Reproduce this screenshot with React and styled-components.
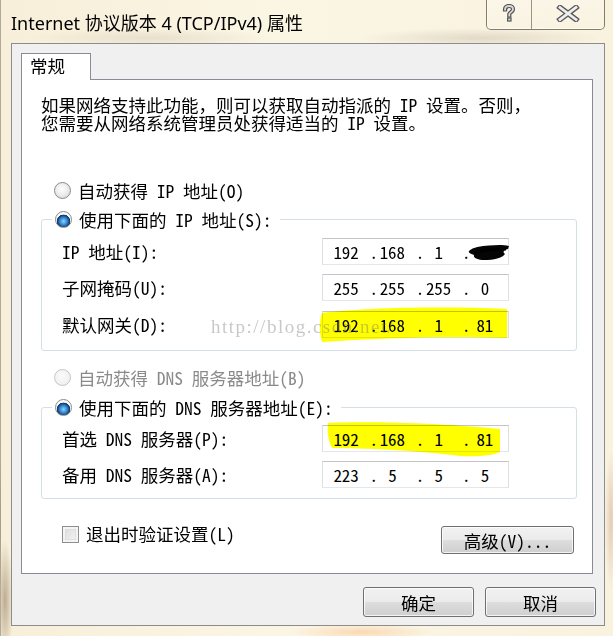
import React from 'react';
import styled, { createGlobalStyle } from 'styled-components';

const BODY_FONT = `"Noto Sans Mono CJK SC", "Noto Sans CJK SC", sans-serif`;

const GlobalStyle = createGlobalStyle`
  html, body {
    margin: 0;
    padding: 0;
  }
  body {
    width: 613px;
    height: 636px;
    overflow: hidden;
    background: #fbf5e4;
  }
`;

export default function App() {
  return (
    <>
      <GlobalStyle />
      <Window>
        <TitleBar>
          <TitleText>Internet 协议版本 4 (TCP/IPv4) 属性</TitleText>
          <CaptionGroup>
            <CaptionButton $w={44}>
              <HelpGlyph />
            </CaptionButton>
            <CaptionButton $w={72} $divider>
              <CloseGlyph />
            </CaptionButton>
          </CaptionGroup>
        </TitleBar>

        <Client>
          <TabStrip>
            <Tab>常规</Tab>
          </TabStrip>
          <Panel>
            <Description>
              如果网络支持此功能，则可以获取自动指派的 IP 设置。否则，
              <br />
              您需要从网络系统管理员处获得适当的 IP 设置。
            </Description>

            <RadioRow $top={47}>
              <RadioMark />
              自动获得 IP 地址(O)
            </RadioRow>

            <Group $top={5} $bottom={12}>
              <GroupLegend>
                <RadioRow>
                  <RadioMark $checked />
                  使用下面的 IP 地址(S):
                </RadioRow>
              </GroupLegend>
              <FieldRow>
                <FieldLabel>IP 地址(I):</FieldLabel>
                <IpField parts={['192', '168', '1', '']} scribble />
              </FieldRow>
              <FieldRow>
                <FieldLabel>子网掩码(U):</FieldLabel>
                <IpField parts={['255', '255', '255', '0']} />
              </FieldRow>
              <FieldRow>
                <FieldLabel>默认网关(D):</FieldLabel>
                <IpField parts={['192', '168', '1', '81']} marker="gateway" />
                <Watermark>http://blog.csdn.net/</Watermark>
              </FieldRow>
            </Group>

            <RadioRow $top={15} $disabled>
              <RadioMark $disabled />
              自动获得 DNS 服务器地址(B)
            </RadioRow>

            <Group $top={6} $bottom={10} $pad={5}>
              <GroupLegend>
                <RadioRow>
                  <RadioMark $checked />
                  使用下面的 DNS 服务器地址(E):
                </RadioRow>
              </GroupLegend>
              <FieldRow>
                <FieldLabel>首选 DNS 服务器(P):</FieldLabel>
                <IpField parts={['192', '168', '1', '81']} marker="dns" />
              </FieldRow>
              <FieldRow>
                <FieldLabel>备用 DNS 服务器(A):</FieldLabel>
                <IpField parts={['223', '5', '5', '5']} />
              </FieldRow>
            </Group>

            <BottomRow>
              <CheckRow>
                <CheckMark />
                退出时验证设置(L)
              </CheckRow>
              <PushButton $w={133} $h={28}>高级(V)...</PushButton>
            </BottomRow>
          </Panel>

          <Footer>
            <PushButton $w={111} $h={30}>确定</PushButton>
            <PushButton $w={111} $h={30}>取消</PushButton>
          </Footer>
        </Client>
      </Window>
    </>
  );
}

function IpField({ parts, marker, scribble }) {
  return (
    <IpBox>
      {parts.map((p, i) => (
        <IpCell key={i}>
          <IpDot>{i > 0 ? '.' : ''}</IpDot>
          <IpNum>{p}</IpNum>
          <span />
        </IpCell>
      ))}
      {scribble && (
        <Marker $x={145} $y={4} $w={42} $h={19} viewBox="0 0 42 19">
          <path
            d="M1,8 C5,4 13,3 21,2.5 C28,2 35,1.5 41,3 L40,6 C36,7 34,9 37,11 C34,15 26,17 16,17 C10,17 5,15 6,12 C3,11 0,10 1,8 Z"
            fill="#050505"
          />
          <path d="M6,10 C14,7 26,6 38,6" stroke="#000" strokeWidth="3" fill="none" />
        </Marker>
      )}
      {marker === 'gateway' && (
        <Marker $x={-4} $y={-5} $w={188} $h={36} viewBox="0 0 188 36" $blend>
          <path
            d="M3,6 C40,1 120,-1 188,2 L188,31 C130,29 60,31 3,35 C0,25 0,14 3,6 Z"
            fill="#ffff00"
          />
        </Marker>
      )}
      {marker === 'dns' && (
        <Marker $x={5} $y={-6} $w={173} $h={38} viewBox="0 0 173 38" $blend>
          <path
            d="M0,3 C50,1 120,4 172,9 L172,32 C165,36 145,37 132,36 C100,32 50,28 4,28 C0,20 -1,10 0,3 Z"
            fill="#ffff00"
          />
        </Marker>
      )}
    </IpBox>
  );
}

function HelpGlyph() {
  return (
    <svg width="14" height="19" viewBox="0 0 14 19">
      <path
        d="M3,5.5 C3,3 4.8,2 7,2 C9.5,2 11,3.4 11,5.3 C11,7.6 8,8.2 7.3,10 L7.3,11.5"
        stroke="#555"
        strokeWidth="4.2"
        fill="none"
        strokeLinecap="square"
      />
      <path
        d="M3,5.5 C3,3 4.8,2 7,2 C9.5,2 11,3.4 11,5.3 C11,7.6 8,8.2 7.3,10 L7.3,11.5"
        stroke="#d8d8d8"
        strokeWidth="1.8"
        fill="none"
        strokeLinecap="square"
      />
      <rect x="5" y="13.4" width="4.6" height="4.2" fill="#555" />
      <rect x="6.2" y="14.6" width="2.2" height="1.8" fill="#d8d8d8" />
    </svg>
  );
}

function CloseGlyph() {
  return (
    <svg width="24" height="17" viewBox="0 0 24 17">
      <path d="M4,2.5 L20,14.5 M20,2.5 L4,14.5" stroke="#5a5a5a" strokeWidth="5.4" strokeLinecap="square" />
      <path d="M4,2.5 L20,14.5 M20,2.5 L4,14.5" stroke="#eeeeee" strokeWidth="2.8" strokeLinecap="square" />
    </svg>
  );
}

const Window = styled.div`
  width: 613px;
  height: 636px;
  box-sizing: border-box;
  display: flex;
  flex-direction: column;
  padding: 0 8px 10px 10px;
  background:
    radial-gradient(ellipse 8px 60px at 4px 600px, rgba(120, 90, 60, 0.45), transparent),
    radial-gradient(ellipse 6px 70px at 610px 520px, rgba(190, 130, 100, 0.35), transparent),
    radial-gradient(ellipse 70px 8px at 360px 632px, rgba(250, 190, 130, 0.5), transparent),
    radial-gradient(ellipse 120px 10px at 150px 38px, rgba(200, 190, 170, 0.35), transparent),
    radial-gradient(ellipse 120px 10px at 480px 38px, rgba(180, 170, 150, 0.35), transparent),
    linear-gradient(90deg, #f7efd9 0%, #fbf5e4 45%, #f9f2df 100%);
  border-left: 1px solid rgba(110, 100, 80, 0.5);
  font-family: ${BODY_FONT};
`;

const TitleBar = styled.div`
  height: 43px;
  display: flex;
  justify-content: space-between;
  align-items: flex-start;
`;

const TitleText = styled.div`
  padding-top: 11px;
  font-family: "Noto Sans", "Noto Sans CJK SC", sans-serif;
  font-size: 18px;
  line-height: 24px;
  color: #000;
`;

const CaptionGroup = styled.div`
  display: flex;
  height: 29px;
  margin-left: -1px;
  border: 1px solid rgba(95, 85, 65, 0.75);
  border-top: none;
  border-radius: 0 0 5px 5px;
  box-shadow: inset 0 -1px 0 rgba(255, 255, 255, 0.7), inset 1px 0 0 rgba(255, 255, 255, 0.5);
  overflow: hidden;
`;

const CaptionButton = styled.div`
  width: ${p => p.$w}px;
  display: flex;
  align-items: center;
  justify-content: center;
  padding-bottom: 2px;
  border-left: ${p => (p.$divider ? '1px solid rgba(95, 85, 65, 0.6)' : 'none')};
  background: linear-gradient(180deg, rgba(255, 255, 255, 0.25), rgba(255, 255, 255, 0.05));
`;

const Client = styled.div`
  flex: 1;
  display: flex;
  flex-direction: column;
  padding: 9px 8px 8px 9px;
  background: #f0f0f0;
  border: 1px solid #8c8c8c;
`;

const TabStrip = styled.div`
  display: flex;
`;

const Tab = styled.div`
  position: relative;
  width: 70px;
  height: 27px;
  box-sizing: border-box;
  margin-bottom: -1px;
  padding-left: 8px;
  background: #fff;
  border: 1px solid #898c95;
  border-bottom: none;
  font-size: 17.5px;
  line-height: 24px;
  color: #000;
`;

const Panel = styled.div`
  margin-right: 3px;
  padding: 16px 15px 19px 19px;
  background: #fff;
  border: 1px solid #898c95;
  color: #000;
  font-size: 17.5px;
`;

const Description = styled.div`
  line-height: 18px;
`;

const RadioRow = styled.div`
  display: flex;
  align-items: center;
  gap: 7px;
  height: 24px;
  margin-top: ${p => p.$top || 0}px;
  padding-left: ${p => (p.$top !== undefined ? 13 : 0)}px;
  color: ${p => (p.$disabled ? '#8a8a8a' : '#000')};
  white-space: nowrap;
`;

const RadioMark = styled.span`
  flex: none;
  width: 17px;
  height: 17px;
  box-sizing: border-box;
  border-radius: 50%;
  border: 1px solid ${p => (p.$disabled ? '#c4c4c4' : '#8a8a8a')};
  background: ${p =>
    p.$checked
      ? 'radial-gradient(circle at 50% 62%, #8fd0ff 0%, #3b8fd6 28%, #134a86 48%, #0c2f5a 54%, #f4f4f4 58%, #ffffff 72%, #d6d6d6 100%)'
      : p.$disabled
        ? 'radial-gradient(circle at 45% 40%, #fbfbfb 0%, #f2f2f2 60%, #e6e6e6 100%)'
        : 'radial-gradient(circle at 45% 40%, #ffffff 0%, #e9e9e9 55%, #cfcfcf 100%)'};
  box-shadow: 0 0 0 1px rgba(255, 255, 255, 0.8);
`;

const Group = styled.fieldset`
  margin: ${p => p.$top}px 0 0 0;
  padding: ${p => p.$pad || 6}px 0 ${p => p.$bottom}px 10px;
  min-inline-size: 0;
  border: 1px solid #d5dfe5;
  border-radius: 3px;
  display: flex;
  flex-direction: column;
  gap: 9.5px;
`;

const GroupLegend = styled.legend`
  padding: 0 8px 0 3px;
`;

const FieldRow = styled.div`
  position: relative;
  display: grid;
  grid-template-columns: 260px 187px;
  align-items: center;
  height: 27px;
  padding-left: 10px;
  white-space: nowrap;
`;

const FieldLabel = styled.span`
  color: #000;
`;

const IpBox = styled.div`
  position: relative;
  height: 27px;
  box-sizing: border-box;
  display: grid;
  grid-template-columns: repeat(4, 1fr);
  align-items: center;
  background: #fff;
  border: 1px solid;
  border-color: #c2c4c8 #dcdfe3 #e4e6ea #dcdfe3;
  font-size: 17px;
  color: #000;
`;

const IpCell = styled.div`
  display: grid;
  grid-template-columns: 9px 1fr 9px;
  align-items: center;
  line-height: 25px;
`;

const IpDot = styled.span`
  text-align: center;
`;

const IpNum = styled.span`
  text-align: center;
`;

const Marker = styled.svg`
  position: absolute;
  left: ${p => p.$x}px;
  top: ${p => p.$y}px;
  width: ${p => p.$w}px;
  height: ${p => p.$h}px;
  overflow: visible;
  pointer-events: none;
  mix-blend-mode: ${p => (p.$blend ? 'multiply' : 'normal')};
`;

const Watermark = styled.span`
  position: absolute;
  left: 159px;
  top: 6px;
  font-family: "Liberation Serif", serif;
  font-size: 19px;
  line-height: 19px;
  letter-spacing: 1.5px;
  color: rgba(110, 110, 110, 0.38);
  pointer-events: none;
`;

const BottomRow = styled.div`
  display: flex;
  align-items: flex-start;
  justify-content: space-between;
  margin-top: 27px;
  padding: 0 3px 0 21px;
`;

const CheckRow = styled.div`
  display: flex;
  align-items: center;
  gap: 7px;
  height: 18px;
  margin-top: -1px;
  line-height: 18px;
  white-space: nowrap;
`;

const CheckMark = styled.span`
  width: 17px;
  height: 17px;
  box-sizing: border-box;
  border: 1px solid #8e8f8f;
  box-shadow: inset 0 0 0 2px #f4f4f4, inset 0 0 0 3px #dedede;
  background-image: linear-gradient(135deg, #d9d9d9, #f7f7f7);
`;

const PushButton = styled.div`
  width: ${p => p.$w}px;
  height: ${p => p.$h}px;
  box-sizing: border-box;
  display: flex;
  align-items: center;
  justify-content: center;
  border: 1px solid #707070;
  border-radius: 3px;
  background: linear-gradient(180deg, #f2f2f2 0%, #ebebeb 48%, #dddddd 52%, #cfcfcf 100%);
  box-shadow: inset 0 0 0 1px rgba(255, 255, 255, 0.75);
  font-size: 17.5px;
  color: #000;
`;

const Footer = styled.div`
  display: flex;
  justify-content: flex-end;
  gap: 11px;
  margin-top: 13px;
`;
